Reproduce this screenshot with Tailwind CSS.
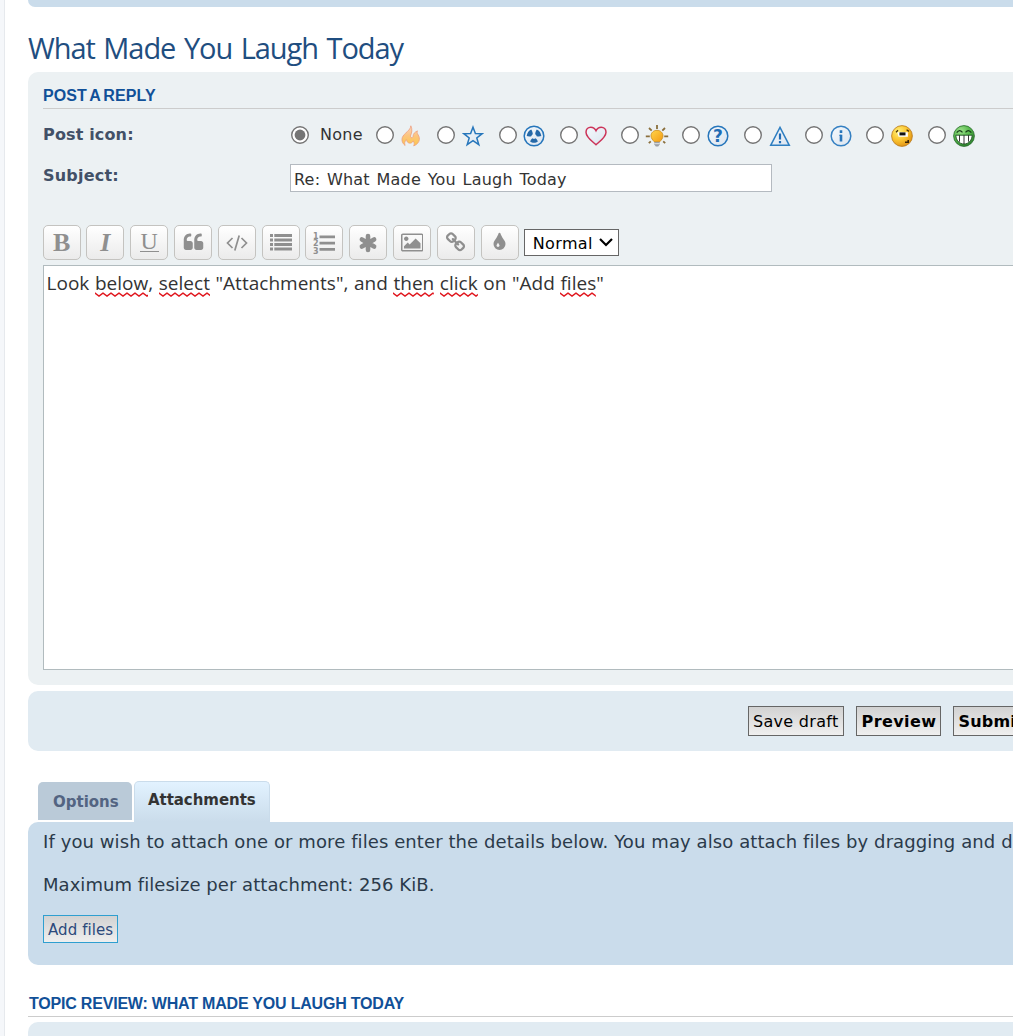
<!DOCTYPE html>
<html lang="en">
<head>
<meta charset="utf-8">
<title>Post a reply</title>
<script src="https://cdn.jsdelivr.net/npm/@tailwindcss/browser@4"></script>
</head>
<body class="h-[1036px] overflow-hidden bg-[#f5f7fa] pl-1 font-['DejaVu_Sans',sans-serif] text-[16px] text-[#333]">
<svg width="0" height="0" class="absolute">
  <defs>
    <linearGradient id="flame" x1="0" y1="0" x2="0" y2="1"><stop offset="0" stop-color="#fbd3c0"/><stop offset=".5" stop-color="#fcc57e"/><stop offset="1" stop-color="#fcc94a"/></linearGradient>
    <linearGradient id="bulb" x1="0" y1="0" x2="1" y2="1"><stop offset="0" stop-color="#ffd54a"/><stop offset="1" stop-color="#f39a12"/></linearGradient>
    <linearGradient id="pale" x1="0" y1="0" x2="1" y2="1"><stop offset="0" stop-color="#f4f9fd"/><stop offset="1" stop-color="#dbe4ee"/></linearGradient>
    <radialGradient id="yellow" cx=".35" cy=".3" r=".8"><stop offset="0" stop-color="#fff27a"/><stop offset=".5" stop-color="#fbc531"/><stop offset="1" stop-color="#dc8a10"/></radialGradient>
    <radialGradient id="green" cx=".35" cy=".25" r=".85"><stop offset="0" stop-color="#9be08a"/><stop offset=".5" stop-color="#55b84a"/><stop offset="1" stop-color="#27762a"/></radialGradient>
    <symbol id="radio" viewBox="0 0 20 20"><circle cx="10" cy="10" r="8.300" fill="#fff" stroke="#757575" stroke-width="1.400"/></symbol>
    <pattern id="wave" width="8" height="5" patternUnits="userSpaceOnUse"><path d="M-1 .3 0 1l4 3 4-3 1-.7" fill="none" stroke="#e0161e" stroke-width="1.400"/></pattern>
  </defs>
</svg>
<div class="h-[1036px] border-l border-[#e6e9ed] bg-white pl-[23px]">
  <div class="h-[7px] rounded-bl-[10px] bg-[#cadceb]"></div>
  <h2 class="mt-[21px] mb-1 h-10 font-['Open_Sans',sans-serif] text-[29px] leading-10 tracking-[-1.08px] [word-spacing:2.2px] whitespace-nowrap text-[#1f4e80]">What Made You Laugh Today</h2>

  <section class="h-[613px] rounded-l-[10px] bg-[#ecf1f3] pt-[11px] pl-[15px]">
    <h3 class="h-[26px] border-b border-[#ccc] font-['Liberation_Sans',sans-serif] text-[16px] leading-[25px] font-bold tracking-[0.1px] [word-spacing:-1.6px] text-[#115098]">POST A REPLY</h3>
    <div class="mt-[11px] flex h-[29px] items-center">
      <div class="w-[247px] shrink-0 font-bold tracking-[0.15px] text-[#425067]">Post icon:</div>
      <label class="flex w-[85px] shrink-0 items-center gap-[10px]">
        <svg class="mt-px size-5 shrink-0" viewBox="0 0 20 20"><circle cx="10" cy="10" r="8.300" fill="#fff" stroke="#757575" stroke-width="1.400"/><circle cx="10" cy="10" r="5.400" fill="#757575"/></svg>
        <span class="tracking-[0.25px]">None</span>
      </label>
      <label class="flex w-[61.3px] shrink-0 items-center gap-[6px]"><svg class="mt-px size-5"><use href="#radio"/></svg>
        <svg class="mt-[3px] -ml-px size-[22px]" viewBox="0 0 22 22"><path d="M10.800.8c-.1 2.300-1.600 4-3.400 5.700C5.200 8.600 3 10.300 2.200 12.800c-.8 2.900.3 5.800 2.900 7.700-.8-2.300-.5-4.200 1.300-6 .3 1.900 1.200 3.200 2.800 3.600 1.700.4 3.200-.6 4-2.200 1.200 1.500 1.300 3.300.5 5 3.300-1.300 5.500-3.700 5.700-6.600.1-2.400-1-4-1.900-5.500-.5-.9-.5-1.700 0-2.900-2.400.9-4.400 2.900-4.400 5 0 1-.5 1.800-1.300 1.800-1.200 0-1.600-1.300-1-2.700.9-2.100 1.800-5.500 0-9.200z" fill="url(#flame)" stroke="#ee9e7e" stroke-width=".8"/></svg></label>
      <label class="flex w-[61.3px] shrink-0 items-center gap-[6px]"><svg class="mt-px size-5"><use href="#radio"/></svg>
        <svg class="mt-[3px] size-[22px]" viewBox="0 0 22 22"><path d="m11 2.200 2.400 6.300 6.700.2-5.300 4.200 2 6.700-5.800-3.900-5.800 3.900 2-6.700-5.300-4.200 6.700-.2z" fill="url(#pale)" stroke="#2676bb" stroke-width="1.500"/></svg></label>
      <label class="flex w-[61.3px] shrink-0 items-center gap-[6px]"><svg class="mt-px size-5"><use href="#radio"/></svg>
        <svg class="mt-[3px] -ml-px size-[22px]" viewBox="0 0 22 22"><circle cx="11" cy="11" r="9.800" fill="url(#pale)" stroke="#2676bb" stroke-width="1.500"/><g fill="#2569a8"><path d="M8.200 4.600c.9 1.300 1.600 3 1.600 4.700-.7.500-1.200 1.100-1.500 1.900-1.600.4-3.200.3-4.600-.2.300-2.700 2-5.300 4.500-6.400zM13.800 4.600c-.9 1.300-1.600 3-1.600 4.700.7.500 1.200 1.100 1.500 1.900 1.600.4 3.200.3 4.600-.2-.3-2.700-2-5.300-4.500-6.400zM9.300 13.300c1 .7 2.400.7 3.400 0 1 .9 1.800 1.900 2.200 3.100-2.200 1.700-5.600 1.700-7.800 0 .4-1.200 1.200-2.200 2.200-3.100z"/></g></svg></label>
      <label class="flex w-[61.3px] shrink-0 items-center gap-[6px]"><svg class="mt-px size-5"><use href="#radio"/></svg>
        <svg class="mt-[3px] size-[22px]" viewBox="0 0 22 22"><path d="M11 19.700C7.500 16.600 1 12.300 1 7.200 1 4.200 3.200 2.200 5.800 2.200c2.400 0 4.200 1.500 5.200 3.500 1-2 2.800-3.500 5.200-3.500 2.600 0 4.800 2 4.800 5 0 5.100-6.500 9.400-10 12.500z" fill="url(#pale)" stroke="#cc3358" stroke-width="1.500"/></svg></label>
      <label class="flex w-[61.3px] shrink-0 items-center gap-[6px]"><svg class="mt-px size-5"><use href="#radio"/></svg>
        <svg class="mt-[3px] -ml-px size-6" viewBox="0 0 24 24"><path d="M12 1v4M4 4l2.700 2.700M20 4l-2.700 2.700M.8 12.300h4M23.200 12.300h-4M3.800 19.200l2-1.800M20.200 19.200l-2-1.800" fill="none" stroke="#8a6f3c" stroke-width="1.800"/><path d="M12 6.300c3.500 0 6 2.500 6 5.500 0 2.500-1.600 4-3.200 5.900H9.200C7.600 15.800 6 14.300 6 11.800c0-3 2.500-5.500 6-5.500z" fill="url(#bulb)" stroke="#c98a1c" stroke-width=".8"/><path d="M9.300 18h5.400v2.600l-1.500 2h-2.400l-1.500-2z" fill="#9ba0a6"/><path d="M9.300 19.700h5.400" stroke="#e3e5e8"/></svg></label>
      <label class="flex w-[61.3px] shrink-0 items-center gap-[6px]"><svg class="mt-px size-5"><use href="#radio"/></svg>
        <svg class="mt-[3px] size-[22px]" viewBox="0 0 22 22"><circle cx="11" cy="11" r="9.800" fill="url(#pale)" stroke="#2676bb" stroke-width="1.500"/><text x="11" y="17" text-anchor="middle" font-family="DejaVu Sans" font-weight="bold" font-size="17" fill="#1f6cb5">?</text></svg></label>
      <label class="flex w-[61.3px] shrink-0 items-center gap-[6px]"><svg class="mt-px size-5"><use href="#radio"/></svg>
        <svg class="mt-[3px] size-[22px]" viewBox="0 0 22 22"><path d="M11 2.400 20.300 20.300H1.700z" fill="url(#pale)" stroke="#2f7fc1" stroke-width="1.500"/><path d="M11 8.500v6M11 16v2.300" stroke="#1f6cb5" stroke-width="2.200"/></svg></label>
      <label class="flex w-[61.3px] shrink-0 items-center gap-[6px]"><svg class="mt-px size-5"><use href="#radio"/></svg>
        <svg class="mt-[3px] size-[22px]" viewBox="0 0 22 22"><circle cx="11" cy="11" r="9.800" fill="url(#pale)" stroke="#3580c2" stroke-width="1.500"/><path d="M11 5.300v2.600M11 9.800v6.800" stroke="#2875bb" stroke-width="2.600"/><path d="M9.300 10.300h2" stroke="#2875bb" stroke-width="1"/></svg></label>
      <label class="flex w-[61.3px] shrink-0 items-center gap-[6px]"><svg class="mt-px size-5"><use href="#radio"/></svg>
        <svg class="mt-[3px] size-[22px]" viewBox="0 0 22 22"><circle cx="11" cy="11" r="10.400" fill="url(#yellow)" stroke="#b8791a" stroke-width=".8"/><path d="M6.300 7.200h10.600v4.600H7.600z" fill="#fff"/><path d="M8.500 7.400h6v3h-6z" fill="#111"/><path d="M5 7.200 7 5.200M15.600 4.800l2.400 1.600" stroke="#4a3008" stroke-width="1.300"/><path d="M14 17.300h3.200v-2.200" fill="none" stroke="#3a2506" stroke-width="1.600"/></svg></label>
      <label class="flex shrink-0 items-center gap-[6px]"><svg class="mt-px size-5"><use href="#radio"/></svg>
        <svg class="mt-[3px] size-[22px]" viewBox="0 0 22 22"><circle cx="11" cy="11" r="10.400" fill="url(#green)" stroke="#246a28" stroke-width=".8"/><path d="M3.700 7.700q2.800-4 5.800-.3M12.500 7.400q3-3.700 5.800.3" fill="none" stroke="#173f18" stroke-width="1.200"/><path d="M2.800 10.200h16.400c-.2 5-3.400 8.800-8.200 8.800s-8-3.800-8.200-8.800z" fill="#fff" stroke="#1d4f20" stroke-width=".9"/><path d="M6.500 10.200v6.500M11 10.200V19M15.500 10.200v6.500" stroke="#222" stroke-width=".9"/></svg></label>
    </div>
    <div class="mt-[15px] flex h-7">
      <div class="w-[247px] shrink-0 leading-[23px] font-bold tracking-[0.2px] text-[#425067]">Subject:</div>
      <div class="h-7 w-[482px] border border-[#b4bac0] bg-white pl-[3px] leading-[30px] tracking-[0.2px] [word-spacing:1.45px]">Re: What Made You Laugh Today</div>
    </div>

    <div class="mt-[33px] -ml-[0.4px] flex h-[35px] items-center gap-[5.8px] text-[#8f8f8f]">
      <div class="grid h-[35px] w-[38px] shrink-0 place-items-center rounded-[5px] border border-[#c4c3c0] bg-linear-to-b from-white to-[#ebebeb] font-['Liberation_Serif',serif] text-[26px] leading-none font-bold">B</div>
      <div class="grid h-[35px] w-[38px] shrink-0 place-items-center rounded-[5px] border border-[#c4c3c0] bg-linear-to-b from-white to-[#ebebeb] font-['Liberation_Serif',serif] text-[26px] leading-none font-bold italic">I</div>
      <div class="grid h-[35px] w-[38px] shrink-0 place-items-center rounded-[5px] border border-[#c4c3c0] bg-linear-to-b from-white to-[#ebebeb]"><span class="h-[18px] w-[19px] border-b border-[#8f8f8f] text-center font-['Liberation_Serif',serif] text-[24px] leading-[15px]">U</span></div>
      <div class="grid h-[35px] w-[38px] shrink-0 place-items-center rounded-[5px] border border-[#c4c3c0] bg-linear-to-b from-white to-[#ebebeb]"><svg class="size-[21px]" viewBox="0 0 1792 1792" fill="currentColor"><path d="M832 960v384q0 80-56 136t-136 56h-384q-80 0-136-56t-56-136v-704q0-104 40.500-198.500t109.500-163.500 163.500-109.500 198.500-40.500h64q26 0 45 19t19 45v128q0 26-19 45t-45 19h-64q-106 0-181 75t-75 181v32q0 40 28 68t68 28h224q80 0 136 56t56 136zm896 0v384q0 80-56 136t-136 56h-384q-80 0-136-56t-56-136v-704q0-104 40.500-198.500t109.500-163.500 163.500-109.500 198.500-40.500h64q26 0 45 19t19 45v128q0 26-19 45t-45 19h-64q-106 0-181 75t-75 181v32q0 40 28 68t68 28h224q80 0 136 56t56 136z"/></svg></div>
      <div class="grid h-[35px] w-[38px] shrink-0 place-items-center rounded-[5px] border border-[#c4c3c0] bg-linear-to-b from-white to-[#ebebeb]"><svg class="h-[18px] w-[22px]" viewBox="0 0 22 18" fill="none" stroke="currentColor" stroke-width="1.700"><path d="M6.500 4 1.500 9l5 5M15.500 4l5 5-5 5M13.200 1.500 8.800 16.500"/></svg></div>
      <div class="grid h-[35px] w-[38px] shrink-0 place-items-center rounded-[5px] border border-[#c4c3c0] bg-linear-to-b from-white to-[#ebebeb]"><svg class="-mt-0.5 h-[18px] w-[22px]" viewBox="0 0 22 18" fill="currentColor"><path d="M0 1h3v3H0zM4.300 1H22v3H4.300zM0 5.500h3v3H0zM4.300 5.500H22v3H4.300zM0 10h3v3H0zM4.300 10H22v3H4.300zM0 14.500h3v3H0zM4.300 14.500H22v3H4.300z"/></svg></div>
      <div class="grid h-[35px] w-[38px] shrink-0 place-items-center rounded-[5px] border border-[#c4c3c0] bg-linear-to-b from-white to-[#ebebeb]"><svg class="h-[22px] w-[22px]" viewBox="0 0 22 22" fill="currentColor"><path d="M6.500 3.500H22v2.800H6.500zM6.500 9.700H22v2.800H6.500zM6.500 15.900H22v2.800H6.500z"/><g font-family="DejaVu Sans" font-weight="bold" font-size="8"><text x="0" y="6.500">1</text><text x="0" y="14.200">2</text><text x="0" y="21.500">3</text></g></svg></div>
      <div class="grid h-[35px] w-[38px] shrink-0 place-items-center rounded-[5px] border border-[#c4c3c0] bg-linear-to-b from-white to-[#ebebeb]"><svg class="size-5" viewBox="0 0 20 20" fill="none" stroke="currentColor" stroke-width="4.600" stroke-linecap="round"><path d="M10 3v14M3.900 6.500l12.200 7M3.900 13.500l12.200-7"/></svg></div>
      <div class="grid h-[35px] w-[38px] shrink-0 place-items-center rounded-[5px] border border-[#c4c3c0] bg-linear-to-b from-white to-[#ebebeb]"><svg class="h-[21px] w-[22.5px]" viewBox="-64 0 1920 1792" fill="currentColor"><path d="M576 576q0 80-56 136t-136 56-136-56-56-136 56-136 136-56 136 56 56 136zm1024 384v448h-1408v-192l320-320 160 160 512-512zm96-704h-1600q-13 0-22.500 9.500t-9.500 22.500v1216q0 13 9.500 22.500t22.500 9.500h1600q13 0 22.500-9.500t9.500-22.500v-1216q0-13-9.500-22.500t-22.500-9.500zm160 32v1216q0 66-47 113t-113 47h-1600q-66 0-113-47t-47-113v-1216q0-66 47-113t113-47h1600q66 0 113 47t47 113z"/></svg></div>
      <div class="grid h-[35px] w-[38px] shrink-0 place-items-center rounded-[5px] border border-[#c4c3c0] bg-linear-to-b from-white to-[#ebebeb]"><svg class="size-[21px]" viewBox="0 0 1792 1792" fill="currentColor"><path d="M1520 1216q0-40-28-68l-208-208q-28-28-68-28-42 0-72 32 3 3 19 18.500t21.500 21.500 15 19 13 25.500 3.500 27.500q0 40-28 68t-68 28q-15 0-27.500-3.500t-25.500-13-19-15-21.500-21.500-18.500-19q-33 31-33 73 0 40 28 68l206 207q27 27 68 27 40 0 68-26l147-146q28-28 28-67zm-703-705q0-40-28-68l-206-207q-28-28-68-28-39 0-68 27l-147 146q-28 28-28 67 0 40 28 68l208 208q27 27 68 27 42 0 72-31-3-3-19-18.500t-21.500-21.500-15-19-13-25.500-3.500-27.500q0-40 28-68t68-28q15 0 27.500 3.500t25.500 13 19 15 21.500 21.500 18.500 19q33-31 33-73zm895 705q0 120-85 203l-147 146q-83 83-203 83-121 0-204-85l-206-207q-83-83-83-203 0-123 88-209l-88-88q-86 88-208 88-120 0-204-84l-208-208q-84-84-84-204t85-203l147-146q83-83 203-83 121 0 204 85l206 207q83 83 83 203 0 123-88 209l88 88q86-88 208-88 120 0 204 84l208 208q84 84 84 204z"/></svg></div>
      <div class="grid h-[35px] w-[38px] shrink-0 place-items-center rounded-[5px] border border-[#c4c3c0] bg-linear-to-b from-white to-[#ebebeb]"><svg class="size-[21px]" viewBox="0 0 1792 1792" fill="currentColor"><path d="M896 1152q0-36-20-69-1-1-15.500-22.500t-25.500-38-25-44-21-50.500q-4-16-21-16t-21 16q-7 23-21 50.500t-25 44-25.500 38-15.500 22.500q-20 33-20 69 0 53 37.500 90.500t90.500 37.500 90.500-37.500 37.500-90.500zm512-128q0 212-150 362t-362 150-362-150-150-362q0-145 81-275 6-9 62.500-90.500t101-151 99.500-178 83-201.500q9-30 34-47t51-17 51.500 17 33.500 47q28 93 83 201.500t99.500 178 101 151 62.500 90.500q81 127 81 275z"/></svg></div>
      <div class="-ml-[0.6px] flex h-[27px] w-[95px] shrink-0 justify-between border border-[#666] bg-white pr-[5px] pl-2 leading-[28px] tracking-[0.35px] text-black"><span>Normal</span><svg class="mt-[8px] h-[9px] w-[14px]" viewBox="0 0 14 9" fill="none" stroke="#000" stroke-width="2.200"><path d="m1 1 6 6 6-6"/></svg></div>
    </div>

    <div class="mt-[5px] h-[405px] border-y border-l border-[#b1bbbe] bg-white pt-[3px] pl-[2.5px] font-['Open_Sans',sans-serif] text-[19px] leading-[28px] tracking-[0.02px] [word-spacing:0.6px] whitespace-nowrap">Look <span class="relative">below<svg class="absolute top-[22px] left-0 h-[5px] w-full"><rect width="100%" height="5" fill="url(#wave)"/></svg></span>, <span class="relative">select<svg class="absolute top-[22px] left-0 h-[5px] w-full"><rect width="100%" height="5" fill="url(#wave)"/></svg></span> "Attachments", and <span class="relative">then<svg class="absolute top-[22px] left-0 h-[5px] w-full"><rect width="100%" height="5" fill="url(#wave)"/></svg></span> <span class="relative">click<svg class="absolute top-[22px] left-0 h-[5px] w-full"><rect width="100%" height="5" fill="url(#wave)"/></svg></span> on "Add <span class="relative">files<svg class="absolute top-[22px] left-0 h-[5px] w-full"><rect width="100%" height="5" fill="url(#wave)"/></svg></span>"</div>
  </section>

  <div class="mt-1.5 flex h-[60px] gap-3 overflow-hidden rounded-l-[10px] bg-[#e1ebf2] pt-[15px] pl-[720px] whitespace-nowrap text-black">
    <div class="h-[30px] w-24 shrink-0 border border-[#666] bg-linear-to-b from-[#d2d2d2] to-[#efefef] pl-1 leading-[30px] tracking-[0.3px]">Save draft</div>
    <div class="h-[30px] w-[85px] shrink-0 border border-[#666] bg-linear-to-b from-[#d2d2d2] to-[#efefef] pl-[4.5px] leading-[30px] font-bold tracking-[0.4px]">Preview</div>
    <div class="h-[30px] w-20 shrink-0 border border-[#666] bg-linear-to-b from-[#d2d2d2] to-[#efefef] pl-[4.5px] leading-[30px] font-bold tracking-[0.2px]">Submit</div>
  </div>

  <div class="mt-[30px] flex h-[41px] gap-0.5 pl-2.5 text-[15px] font-bold">
    <div class="mt-px h-[38px] w-[94px] rounded-t-[5px] bg-[#bacad8] pl-[15px] leading-[40px] text-[#536482]">Options</div>
    <div class="h-[41px] w-[136px] rounded-t-[5px] border border-b-0 border-[#cadceb] bg-linear-to-b from-[#e2f2ff] to-[#cadceb] pl-[13px] leading-[36px] tracking-[-0.05px]">Attachments</div>
  </div>
  <section class="h-[143px] overflow-hidden rounded-l-[10px] bg-[#cadceb] pt-1.5 pl-[15px] text-[18px] tracking-[0.09px] whitespace-nowrap text-[#2b3a4a]">
    <p class="leading-[28px]">If you wish to attach one or more files enter the details below. You may also attach files by dragging and dropping</p>
    <p class="mt-[15px] leading-[28px] tracking-[0.05px]">Maximum filesize per attachment: 256 KiB.</p>
    <div class="mt-4 h-7 w-[75px] border border-[#2f9fd0] bg-linear-to-b from-[#d2d2d2] to-[#efefef] pl-1 text-[15px] leading-[28px] text-[#2c4a7c]">Add files</div>
  </section>
  <h3 class="mt-[25px] h-[27px] border-b border-[#ccc] pl-px font-['Liberation_Sans',sans-serif] text-[16px] leading-[28px] font-bold tracking-[-0.2px] text-[#115098]">TOPIC REVIEW: WHAT MADE YOU LAUGH TODAY</h3>
  <div class="mt-[5px] h-[14px] rounded-tl-[10px] bg-[#e1ebf2]"></div>
</div>
</body>
</html>
